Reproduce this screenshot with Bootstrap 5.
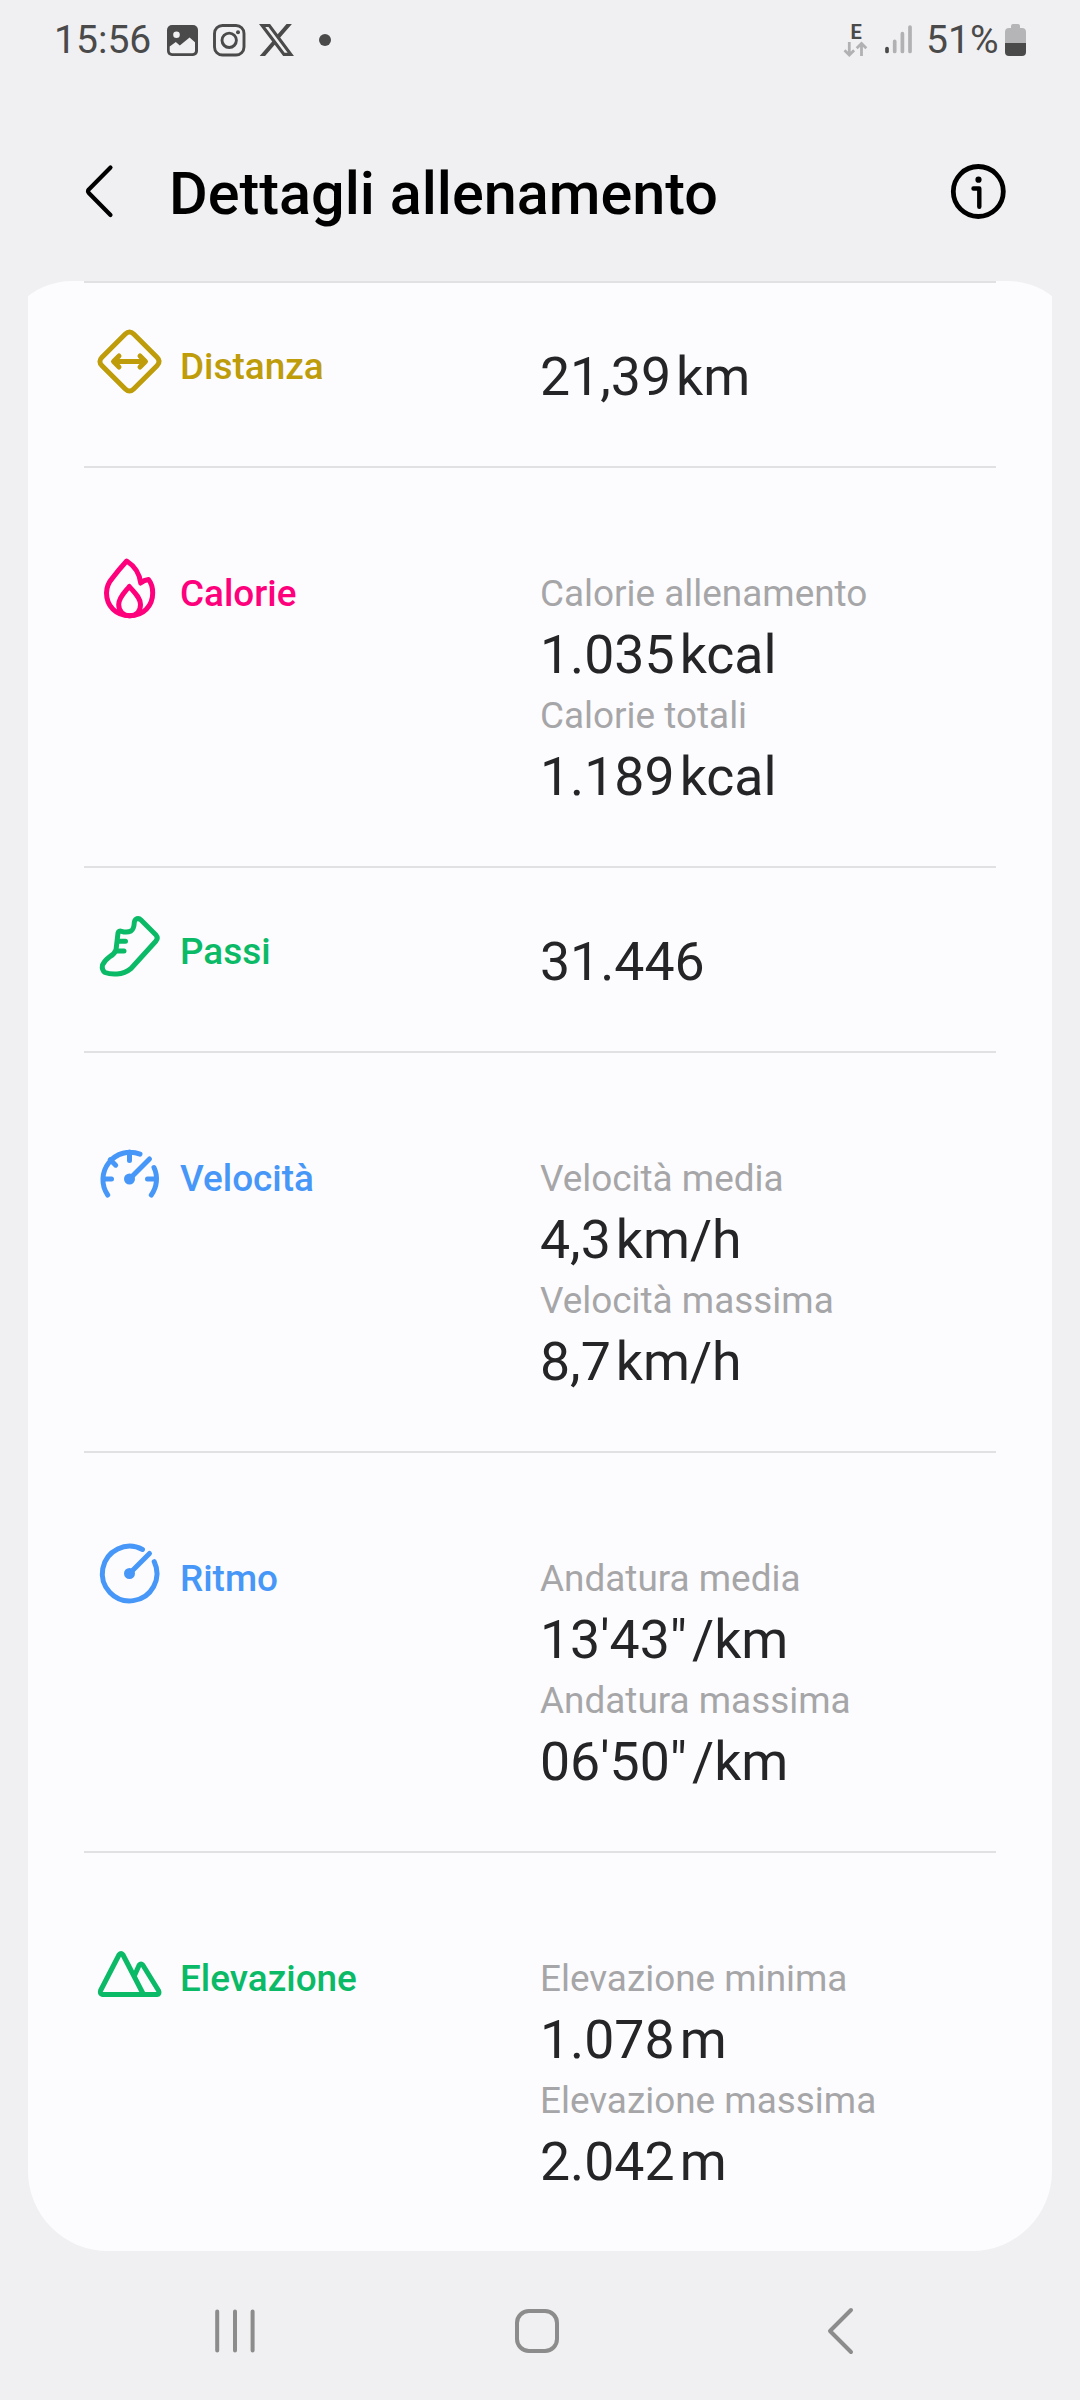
<!DOCTYPE html>
<html lang="it">
<head>
<meta charset="utf-8">
<meta name="viewport" content="width=device-width, initial-scale=1">
<title>Dettagli allenamento</title>
<link href="https://cdn.jsdelivr.net/npm/bootstrap@5.3.0/dist/css/bootstrap.min.css" rel="stylesheet">
<style>
  body { background: #f0f0f2; font-family: Roboto, "Noto Sans", sans-serif; color: #252527; width: 1080px; height: 2400px; overflow: hidden; }
  svg { display: block; flex: none; overflow: visible; }
  .status-bar { height: 80px; padding: 0 54px; color: #4a4a4a; font-size: 39.1px; }
  .status-time { width: 113px; }
  .status-battery-text { width: 79px; margin-left: 14px; }
  .status-time, .status-battery-text { height: 80px; line-height: 80px; white-space: nowrap; }
  .logo-insta { margin-left: 15px; }
  .logo-x { margin-left: 13px; }
  .more-dot { margin-left: 25px; }
  .net-type { width: 26px; height: 33px; margin-right: 16px; }
  .net-type span { font: 700 20px/14px Roboto, sans-serif; height: 18px; padding-top: 1px; }
  .app-header { height: 201px; color: #000; padding: 0 74px 0 84px; }
  .app-title { font-size: 59.35px; font-weight: 500; line-height: 70px; margin: 26px 0 0 54px; }
  .btn-plain { padding: 0; border: 0; color: inherit; margin-top: 21px; }
  .sheet { padding: 0 28px; border-radius: 72px 72px 0 0; overflow: hidden; }
  .sheet > .card { --bs-card-bg: #fcfcfe; border: 0; border-radius: 0 0 80px 80px; padding: 0 56px; height: 1970px; }
  .metric { height: 400px; border-top: 2px solid #e1e1e3; padding: 84px 0 0 9px; }
  .metric-short { height: 185px; padding-top: 42px; }
  .metric svg { fill: none; stroke: currentColor; stroke-width: 5; stroke-linecap: round; stroke-linejoin: round; }
  .metric-name { font-size: 36.9px; font-weight: 500; line-height: 49px; width: 360px; margin: 17px 0 0 14px; }
  .metric-data { padding-top: 17px; }
  .metric-short .metric-data { padding-top: 15px; }
  .metric-sub { font-size: 36.9px; line-height: 49px; color: #a6a6a8; }
  .metric-value { font-size: 53.6px; line-height: 73px; white-space: nowrap; }
  .metric-value span { margin-left: 5px; }
  .c-gold { color: #be9c0a; } .c-pink { color: #ff007d; } .c-green { color: #0bba66; } .c-blue { color: #4797f8; }
  .nav-keys { height: 149px; color: #8c8c8c; padding: 11px 226px 0 215px; }
  .key-home { margin-right: 8px; }
</style>
</head>
<body>
<div class="status-bar d-flex align-items-center">
  <div class="status-time">15:56</div>
  <svg width="31" height="31" viewBox="0 0 31 31"><rect width="31" height="31" rx="5" fill="#4a4a4a"/><circle cx="9.5" cy="9.7" r="3.3" fill="#f0f0f2"/><path d="M2.7 21.5 8.8 17l4 3.6 9.8-8 5.4 4.7v8.2q0 2.8-2.8 2.8H5.5q-2.8 0-2.8-2.8z" fill="#f0f0f2"/></svg>
  <svg class="logo-insta" width="33" height="33" viewBox="0 0 33 33" fill="none" stroke="#4a4a4a" stroke-width="2.9"><rect x="1.5" y="1.5" width="29.5" height="29.5" rx="8"/><circle cx="16.2" cy="16.3" r="7.2"/><circle cx="25" cy="8.2" r="2" fill="#4a4a4a" stroke="none"/></svg>
  <svg class="logo-x" width="35" height="32" viewBox="1.25 2.25 21.6 19.5" preserveAspectRatio="none" fill="#4a4a4a"><path d="M18.244 2.25h3.308l-7.227 8.26 8.502 11.24H16.17l-5.214-6.817L4.99 21.75H1.68l7.73-8.835L1.254 2.25H8.08l4.713 6.231zm-1.161 17.52h1.833L7.084 4.126H5.117z"/></svg>
  <svg class="more-dot" width="12" height="12"><circle cx="6" cy="6" r="6" fill="#4a4a4a"/></svg>
  <div class="net-type d-flex flex-column align-items-center ms-auto">
    <span>E</span>
    <svg width="26" height="15" viewBox="0 0 26 15" fill="none" stroke="#b1b1b3" stroke-width="2.8"><path d="M6.3 0v13M1.5 8.3l4.8 4.7 4.8-4.7M18.5 14V1.5M13.7 6.2l4.8-4.7 4.8 4.7"/></svg>
  </div>
  <svg width="27" height="30" viewBox="0 0 27 30" stroke-width="3.7" stroke-linecap="round" stroke="#b1b1b3"><path d="M2 23.500v3" stroke="#4a4a4a"/><path d="M9.700 16.300v10.200M17.400 8.700v17.800M25 2v24.500"/></svg>
  <div class="status-battery-text">51%</div>
  <svg width="21" height="32" viewBox="0 0 21 32"><path d="M6 4V2q0-2 2-2h5q2 0 2 2v2h2q4 0 4 4v11H0V8q0-4 4-4z" fill="#b5b5b7"/><path d="M0 19h21v9q0 4-4 4H4q-4 0-4-4z" fill="#4a4a4a"/></svg>
</div>

<header class="app-header d-flex align-items-center">
  <button class="btn-plain bg-transparent" aria-label="Indietro"><svg width="31" height="56" viewBox="0 0 31 56" fill="none" stroke="#000" stroke-width="4.2" stroke-linecap="round" stroke-linejoin="round"><path d="M26.500 4.500 4.800 26.400q-1.500 1.800 0 3.600L26.500 52"/></svg></button>
  <h1 class="app-title">Dettagli allenamento</h1>
  <button class="btn-plain bg-transparent ms-auto" aria-label="Informazioni"><svg width="56" height="56" viewBox="0 0 56 56" fill="none" stroke="#000" stroke-linecap="round" stroke-linejoin="round"><circle cx="28.300" cy="28.500" r="25" stroke-width="4.800"/><circle cx="28.500" cy="16.700" r="3.100" fill="#000" stroke="none"/><path d="M23.500 25.500h5.800v18.300" stroke-width="4.400"/></svg></button>
</header>

<main class="sheet">
  <div class="card">
    <section class="metric metric-short d-flex align-items-start">
      <svg class="c-gold" width="73" height="73" viewBox="0 0 73 73"><path d="M32.300 9q4.200-4.200 8.400 0L64 32.300q4.200 4.200 0 8.400L40.700 64q-4.200 4.200-8.400 0L9 40.700q-4.200-4.200 0-8.400z"/><path d="M21 36.500h31M26 31l-5.500 5.500L26 42M47 31l5.500 5.500L47 42"/></svg>
      <div class="metric-name c-gold">Distanza</div>
      <div class="metric-data"><div class="metric-value">21,39<span>km</span></div></div>
    </section>
    <section class="metric d-flex align-items-start">
      <svg class="c-pink" width="73" height="73" viewBox="0 0 73 73"><path d="M33.700 9C30 13 24 20 19.500 26 15 31 13.500 35 13.500 41 13.500 54 23 63.700 36.700 63.700S59.700 54 59.700 41C59.700 35 58 30.500 55.500 27.500Q51 28 47.700 31C46.500 21 41.500 14 33.700 9z"/><path d="M36.300 34.500C32 40 25.700 45.500 25.700 52.500 25.700 59.500 30.500 63.700 36.700 63.700S47.500 59.500 47.500 52.500C47.500 45.500 41 40 36.300 34.500z"/></svg>
      <div class="metric-name c-pink">Calorie</div>
      <div class="metric-data">
        <div class="metric-sub">Calorie allenamento</div><div class="metric-value">1.035<span>kcal</span></div>
        <div class="metric-sub">Calorie totali</div><div class="metric-value">1.189<span>kcal</span></div>
      </div>
    </section>
    <section class="metric metric-short d-flex align-items-start">
      <svg class="c-green" width="73" height="73" viewBox="0 0 73 73"><path d="M42.500 9.500Q45.500 7.500 48 10L63 25Q65.500 28 63 31L38 58.500Q32 63.500 24 64 17 64.500 12 62.500 8.500 60 9.500 55 11.500 50.500 17 46.500 21.500 44 23 40L25 23Q25.700 20.500 28.500 21.300 34 23 38 21 41 19 41.300 12.500 41.500 10.500 42.500 9.500z"/><path d="M24.500 31.300h8M23 41h8"/></svg>
      <div class="metric-name c-green">Passi</div>
      <div class="metric-data"><div class="metric-value">31.446</div></div>
    </section>
    <section class="metric d-flex align-items-start">
      <svg class="c-blue" width="73" height="73" viewBox="0 0 73 73"><path d="M14.700 58A27.300 27.300 0 0 1 47 17.100M61 30.500A27.300 27.300 0 0 1 58.300 58M36.500 15v8.500M17.200 22.700l5.500 5.500M10 42h8.500M63 42h-8.500M36.500 42 56.500 22"/><circle cx="36.500" cy="42" r="3" fill="currentColor"/></svg>
      <div class="metric-name c-blue">Velocità</div>
      <div class="metric-data">
        <div class="metric-sub">Velocità media</div><div class="metric-value">4,3<span>km/h</span></div>
        <div class="metric-sub">Velocità massima</div><div class="metric-value">8,7<span>km/h</span></div>
      </div>
    </section>
    <section class="metric d-flex align-items-start">
      <svg class="c-blue" width="73" height="73" viewBox="0 0 73 73"><path d="M49.500 12.500A27.300 27.300 0 1 0 61.200 24.700M36.500 36.500 56.500 16.500"/><circle cx="36.500" cy="36.500" r="3" fill="currentColor"/></svg>
      <div class="metric-name c-blue">Ritmo</div>
      <div class="metric-data">
        <div class="metric-sub">Andatura media</div><div class="metric-value">13'43"<span>/km</span></div>
        <div class="metric-sub">Andatura massima</div><div class="metric-value">06'50"<span>/km</span></div>
      </div>
    </section>
    <section class="metric d-flex align-items-start">
      <svg class="c-green" width="73" height="73" viewBox="0 0 73 73"><path d="M26.200 17.500Q28 15.300 29.800 17.500L50.500 57.500H9.500Q6.500 57 7.600 53.500zM41.500 38.500 46.200 28Q48 25.800 49.800 28L65.500 53.500Q67 57 64 57.500H50"/></svg>
      <div class="metric-name c-green">Elevazione</div>
      <div class="metric-data">
        <div class="metric-sub">Elevazione minima</div><div class="metric-value">1.078<span>m</span></div>
        <div class="metric-sub">Elevazione massima</div><div class="metric-value">2.042<span>m</span></div>
      </div>
    </section>
  </div>
</main>

<nav class="nav-keys d-flex align-items-center justify-content-between" aria-label="Navigazione">
  <svg width="40" height="46" viewBox="0 0 40 46" stroke="currentColor" stroke-width="4" stroke-linecap="round"><path d="M2.200 3.500v39M20 3.500v39M37.600 3.500v39"/></svg>
  <svg class="key-home" width="44" height="46" viewBox="0 0 44 46" fill="none" stroke="currentColor" stroke-width="4"><rect x="2" y="3" width="40" height="40" rx="12"/></svg>
  <svg width="28" height="46" viewBox="0 0 28 46" fill="none" stroke="currentColor" stroke-width="4" stroke-linecap="round" stroke-linejoin="round"><path d="M25 2 4 23l21 21"/></svg>
</nav>
<script src="https://cdn.jsdelivr.net/npm/bootstrap@5.3.0/dist/js/bootstrap.bundle.min.js"></script>
</body>
</html>
